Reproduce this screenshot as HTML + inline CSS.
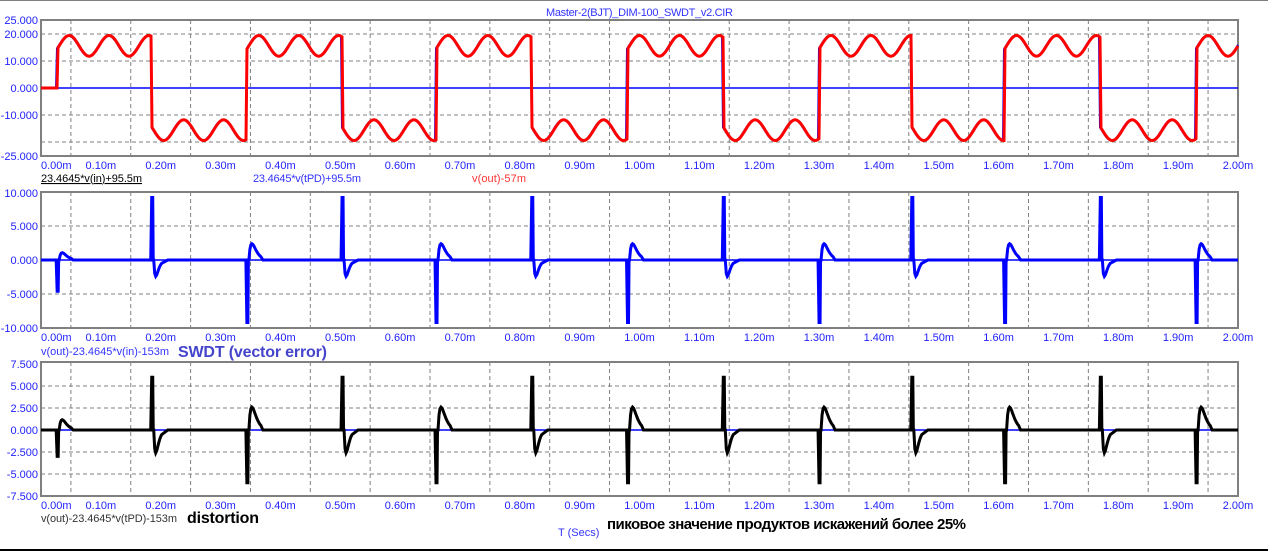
<!DOCTYPE html>
<html><head><meta charset="utf-8"><style>
html,body{margin:0;padding:0;background:#fff;width:1268px;height:551px;overflow:hidden}
svg{display:block}
text{font-family:"Liberation Sans",Arial,sans-serif;font-size:11px}
</style></head><body>
<svg id="s" width="1268" height="551" xmlns="http://www.w3.org/2000/svg">
<line x1="0" y1="0.5" x2="1268" y2="0.5" stroke="#808080"/>
<line x1="0" y1="550" x2="1268" y2="550" stroke="#000" stroke-width="2"/>
<text x="546" y="16" textLength="187" fill="#3333ff">Master-2(BJT)_DIM-100_SWDT_v2.CIR</text>
<text x="41" y="182" textLength="101" fill="#000" text-decoration="underline">23.4645*v(in)+95.5m</text>
<text x="253" y="182" textLength="108" fill="#3333ff">23.4645*v(tPD)+95.5m</text>
<text x="472" y="182" textLength="54" fill="#ff3333">v(out)-57m</text>
<text x="41" y="355" textLength="128" fill="#3333ff">v(out)-23.4645*v(in)-153m</text>
<text x="178" y="357" textLength="149" fill="#4444cc" style="font-size:16px;font-weight:bold">SWDT (vector error)</text>
<text x="41" y="522" textLength="136" fill="#333">v(out)-23.4645*v(tPD)-153m</text>
<text x="187" y="523" textLength="72" fill="#000" style="font-size:16px;font-weight:bold">distortion</text>
<text x="558" y="536" fill="#3333ff">T (Secs)</text>
<text x="607" y="529" textLength="359" fill="#000" style="font-size:15px;font-weight:bold">пиковое значение продуктов искажений более 25%</text>
<g id="g"></g>
</svg>
<script>
var g=document.getElementById('g'),h='';
var X0=41,X1=1238,W=X1-X0;
function xt(t){return X0+t/2*W;}
var plots=[
 {top:20,bot:156,ticks:[[25,'25.000',20],[20,'20.000',34],[10,'10.000',61],[0,'0.000',88],[-10,'-10.000',115],[-20,null,142],[-25,'-25.000',156]],grid:[34,61,115,142],zero:88},
 {top:192,bot:328,ticks:[[10,'10.000',193],[5,'5.000',226],[0,'0.000',260],[-5,'-5.000',294],[-10,'-10.000',328]],grid:[226,294],zero:260},
 {top:362,bot:496,ticks:[[7.5,'7.500',364],[5,'5.000',386],[2.5,'2.500',408],[0,'0.000',430],[-2.5,'-2.500',452],[-5,'-5.000',474],[-7.5,'-7.500',496]],grid:[386,408,452,474],zero:430}
];
plots.forEach(function(p){
 for(var i=0;i<20;i++){var x=X0+29.9+i*W/20;h+='<line x1="'+x+'" y1="'+p.top+'" x2="'+x+'" y2="'+p.bot+'" stroke="#808080" stroke-dasharray="4,3"/>';}
 p.grid.forEach(function(y){h+='<line x1="'+X0+'" y1="'+y+'" x2="'+X1+'" y2="'+y+'" stroke="#808080" stroke-dasharray="4,3"/>';});
 h+='<rect x="'+X0+'" y="'+p.top+'" width="'+W+'" height="'+(p.bot-p.top)+'" fill="none" stroke="#808080" stroke-width="2"/>';
 p.ticks.forEach(function(t){if(t[1])h+='<text x="38" y="'+(t[2]+4)+'" text-anchor="end" fill="#2222ff">'+t[1]+'</text>';});
 for(var i=0;i<=20;i++){var t=i*0.1,x=xt(t),a='middle';if(i==0){x=X0;a='start';}
  h+='<text x="'+x+'" y="'+(p.bot+13)+'" text-anchor="'+a+'" fill="#2222ff">'+t.toFixed(2)+'m</text>';}
 h+='<line x1="'+X0+'" y1="'+p.zero+'" x2="'+X1+'" y2="'+p.zero+'" stroke="#0000ff" stroke-width="1.5"/>';
});
var edges=[0.027,0.185,0.344,0.503,0.66,0.82,0.98,1.14,1.30,1.455,1.61,1.77,1.93];
function sq(t){var k=-1;for(var i=0;i<edges.length;i++)if(t>=edges[i])k=i;if(k<0)return 0;var s=(k%2==0)?1:-1;var e=edges[k];
 return s*(15.5+3.8*Math.cos(2*Math.PI*(t-e-0.02)/0.0667));}
function wave(col,off){var d='';for(var px=0;px<=W;px++){var t=px/W*2;var v=sq(t+off);d+=(px?'L':'M')+(X0+px)+' '+(88-v*2.72).toFixed(1);}
 return '<path d="'+d+'" fill="none" stroke="'+col+'" stroke-width="'+(col=='#f00'?3:2)+'"/>';}
h+=wave('#0000ff',0.001);h+=wave('#f00',0);
function err(zero,sc,big,bump,col){var d='M'+X0+' '+zero;
 edges.forEach(function(e,i){var x=xt(e),s=(i%2==0)?-1:1,b=big,bb=bump;if(i==0){b=big*0.5;bb=bump*0.45;}
  d+='L'+(x-1)+' '+zero+'L'+x+' '+(zero-s*b*sc)+'L'+(x+1)+' '+(zero-s*b*sc)+'L'+(x+1.5)+' '+zero;
  var n=(s>0)?8:12,tc=(s>0)?2:3;
  for(var k=0;k<=n;k++){var dx=k;var v=-s*bb*(dx/tc)*Math.exp(1-dx/tc);d+='L'+(x+2+dx)+' '+(zero-v*sc).toFixed(1);}
  d+='L'+(x+16)+' '+zero;});
 d+='L'+X1+' '+zero;return '<path d="'+d+'" fill="none" stroke="'+col+'" stroke-width="3" stroke-linejoin="miter"/>';}
h+=err(260,6.8,9.2,2.4,'#0000ff');
h+=err(430,8.8,6,2.6,'#000');
g.innerHTML=h;
</script>
</body></html>
